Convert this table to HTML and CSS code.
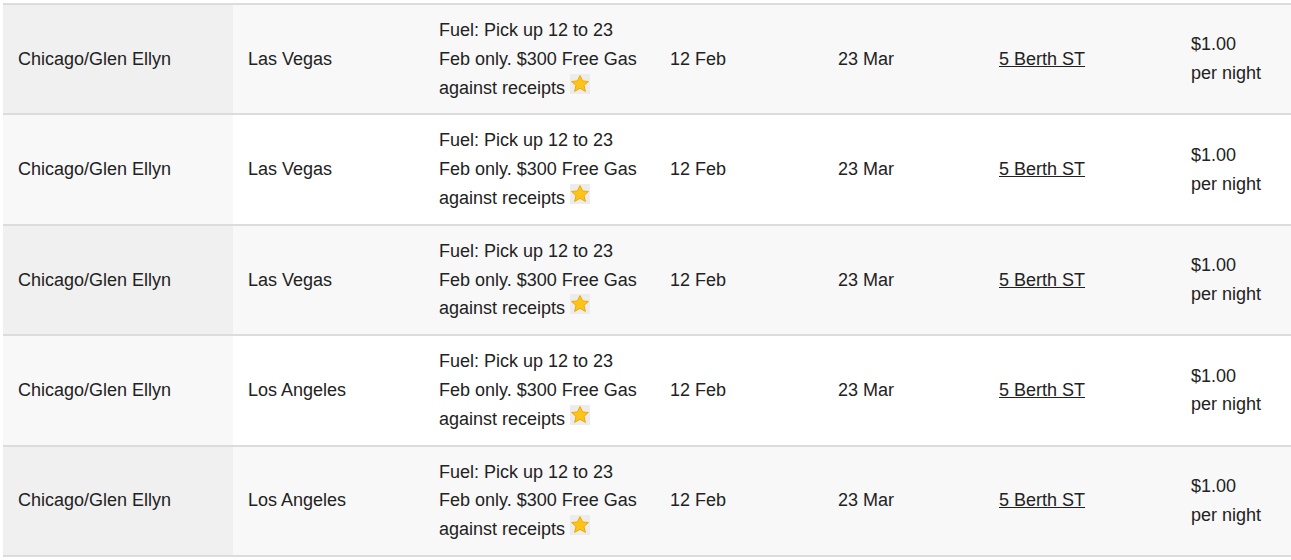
FILE: index.html
```html
<!DOCTYPE html>
<html>
<head>
<meta charset="utf-8">
<link rel="stylesheet" href="styles.css">
</head>
<body>
<div class="wrap">
<table class="deals">
<colgroup>
<col class="c1"><col class="c2"><col class="c3"><col class="c4"><col class="c5"><col class="c6"><col class="c7">
</colgroup>
<tbody>
<tr>
<td class="from">Chicago/Glen Ellyn</td>
<td>Las Vegas</td>
<td>Fuel: Pick up 12 to 23 Feb only. $300 Free Gas against receipts <svg class="star" viewBox="0 0 20 20"><rect width="20" height="20" fill="#ececec"/><path d="M10 1.6 L12.6 6.9 L18.4 7.5 L14 11.5 L15.4 17.4 L10 14.3 L4.6 17.4 L6 11.5 L1.6 7.5 L7.4 6.9 Z" fill="#fcc419" stroke="#f0a800" stroke-width="1" stroke-linejoin="round"/></svg></td>
<td>12 Feb</td>
<td>23 Mar</td>
<td><a href="#">5 Berth ST</a></td>
<td>$1.00<br>per night</td>
</tr>
<tr>
<td class="from">Chicago/Glen Ellyn</td>
<td>Las Vegas</td>
<td>Fuel: Pick up 12 to 23 Feb only. $300 Free Gas against receipts <svg class="star" viewBox="0 0 20 20"><rect width="20" height="20" fill="#ececec"/><path d="M10 1.6 L12.6 6.9 L18.4 7.5 L14 11.5 L15.4 17.4 L10 14.3 L4.6 17.4 L6 11.5 L1.6 7.5 L7.4 6.9 Z" fill="#fcc419" stroke="#f0a800" stroke-width="1" stroke-linejoin="round"/></svg></td>
<td>12 Feb</td>
<td>23 Mar</td>
<td><a href="#">5 Berth ST</a></td>
<td>$1.00<br>per night</td>
</tr>
<tr>
<td class="from">Chicago/Glen Ellyn</td>
<td>Las Vegas</td>
<td>Fuel: Pick up 12 to 23 Feb only. $300 Free Gas against receipts <svg class="star" viewBox="0 0 20 20"><rect width="20" height="20" fill="#ececec"/><path d="M10 1.6 L12.6 6.9 L18.4 7.5 L14 11.5 L15.4 17.4 L10 14.3 L4.6 17.4 L6 11.5 L1.6 7.5 L7.4 6.9 Z" fill="#fcc419" stroke="#f0a800" stroke-width="1" stroke-linejoin="round"/></svg></td>
<td>12 Feb</td>
<td>23 Mar</td>
<td><a href="#">5 Berth ST</a></td>
<td>$1.00<br>per night</td>
</tr>
<tr>
<td class="from">Chicago/Glen Ellyn</td>
<td>Los Angeles</td>
<td>Fuel: Pick up 12 to 23 Feb only. $300 Free Gas against receipts <svg class="star" viewBox="0 0 20 20"><rect width="20" height="20" fill="#ececec"/><path d="M10 1.6 L12.6 6.9 L18.4 7.5 L14 11.5 L15.4 17.4 L10 14.3 L4.6 17.4 L6 11.5 L1.6 7.5 L7.4 6.9 Z" fill="#fcc419" stroke="#f0a800" stroke-width="1" stroke-linejoin="round"/></svg></td>
<td>12 Feb</td>
<td>23 Mar</td>
<td><a href="#">5 Berth ST</a></td>
<td>$1.00<br>per night</td>
</tr>
<tr>
<td class="from">Chicago/Glen Ellyn</td>
<td>Los Angeles</td>
<td>Fuel: Pick up 12 to 23 Feb only. $300 Free Gas against receipts <svg class="star" viewBox="0 0 20 20"><rect width="20" height="20" fill="#ececec"/><path d="M10 1.6 L12.6 6.9 L18.4 7.5 L14 11.5 L15.4 17.4 L10 14.3 L4.6 17.4 L6 11.5 L1.6 7.5 L7.4 6.9 Z" fill="#fcc419" stroke="#f0a800" stroke-width="1" stroke-linejoin="round"/></svg></td>
<td>12 Feb</td>
<td>23 Mar</td>
<td><a href="#">5 Berth ST</a></td>
<td>$1.00<br>per night</td>
</tr>
</tbody>
</table>
</div>
</body>
</html>
```
FILE: styles.css
```css
html, body {
  margin: 0;
  padding: 0;
  background: #fff;
}
.wrap {
  padding: 3px 0 0 3px;
}
.deals {
  border-collapse: collapse;
  table-layout: fixed;
  width: 1288px;
  font-family: "Liberation Sans", Arial, sans-serif;
  font-size: 18px;
  line-height: 28.8px;
  color: #222;
}
.c1 { width: 230px; }
.c2 { width: 191px; }
.c3 { width: 231px; }
.c4 { width: 168px; }
.c5 { width: 161px; }
.c6 { width: 192px; }
.c7 { width: 115px; }
.deals td {
  padding: 11px 15px;
  vertical-align: middle;
  border-top: 2px solid #dcdcdc;
  border-bottom: 2px solid #dcdcdc;
  background: #fff;
}
.deals tr:nth-child(odd) td { background: #f8f8f8; }
.deals tr:nth-child(odd) td.from { background: #f0f0f0; }
.deals tr:nth-child(even) td.from { background: #f8f8f8; }
.deals a {
  color: #222;
  text-decoration: underline;
}
.star {
  width: 20px;
  height: 20px;
  vertical-align: 0;
}
```
